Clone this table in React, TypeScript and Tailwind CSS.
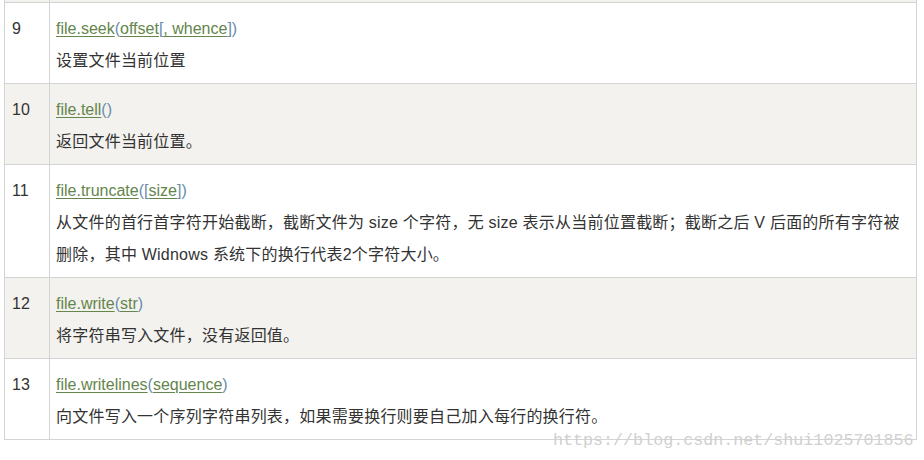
import React from "react";

type Part = { t: string; link?: boolean };

const ROWS: { n: number; sig: Part[]; desc: React.ReactNode }[] = [
  {
    n: 9,
    sig: [
      { t: "file.seek", link: true },
      { t: "(" },
      { t: "offset", link: true },
      { t: "[" },
      { t: ", whence", link: true },
      { t: "])" },
    ],
    desc: "设置文件当前位置",
  },
  {
    n: 10,
    sig: [{ t: "file.tell", link: true }, { t: "()" }],
    desc: "返回文件当前位置。",
  },
  {
    n: 11,
    sig: [
      { t: "file.truncate", link: true },
      { t: "([" },
      { t: "size", link: true },
      { t: "])" },
    ],
    desc: (
      <>
        从文件的首行首字符开始截断，截断文件为 size 个字符，无 size 表示从当前位置截断；截断之后 V 后面的所有字符被
        <br />
        删除，其中 Widnows 系统下的换行代表2个字符大小。
      </>
    ),
  },
  {
    n: 12,
    sig: [
      { t: "file.write", link: true },
      { t: "(" },
      { t: "str", link: true },
      { t: ")" },
    ],
    desc: "将字符串写入文件，没有返回值。",
  },
  {
    n: 13,
    sig: [
      { t: "file.writelines", link: true },
      { t: "(" },
      { t: "sequence", link: true },
      { t: ")" },
    ],
    desc: "向文件写入一个序列字符串列表，如果需要换行则要自己加入每行的换行符。",
  },
];

// 表格行：奇数行白底，偶数行浅灰
const Row = ({ row, shaded }: { row: (typeof ROWS)[number]; shaded: boolean }) => (
  <div className={`flex border-b border-[#d4d4d4] ${shaded ? "bg-[#f3f2ee]" : "bg-white"}`}>
    <div className="w-[45px] shrink-0 border-r border-[#d4d4d4] pl-[7px] pt-[10px] pb-[6px] leading-8">{row.n}</div>
    <div className="flex-1 pl-[6px] pr-2 pt-[10px] pb-[6px] leading-8">
      <div>
        {row.sig.map((p, i) =>
          p.link ? (
            <span key={i} className="text-[#64854c] underline underline-offset-2">
              {p.t}
            </span>
          ) : (
            <span key={i} className="text-[#6a8caa]">
              {p.t}
            </span>
          )
        )}
      </div>
      <div className="whitespace-nowrap tracking-[0.22px]">{row.desc}</div>
    </div>
  </div>
);

export default function App() {
  return (
    <div className="relative w-[924px] h-[460px] bg-white overflow-hidden font-['Liberation_Sans','Noto_Sans_CJK_SC',sans-serif] text-[16px] text-[#333]">
      <div className="ml-1 w-[913px] border-x border-[#d4d4d4]">
        {/* 上一行的残留部分 */}
        <div className="flex h-[3px] bg-[#f3f2ee] border-b border-[#d4d4d4]">
          <div className="w-[45px] border-r border-[#d4d4d4]" />
        </div>
        {ROWS.map((r, i) => (
          <Row key={r.n} row={r} shaded={i % 2 === 1} />
        ))}
      </div>
      <div className="absolute left-[553px] top-[431px] font-['Liberation_Mono',monospace] text-[16.7px] leading-5 text-[#d0d0d0] whitespace-nowrap">
        https://blog.csdn.net/shui1025701856
      </div>
    </div>
  );
}
